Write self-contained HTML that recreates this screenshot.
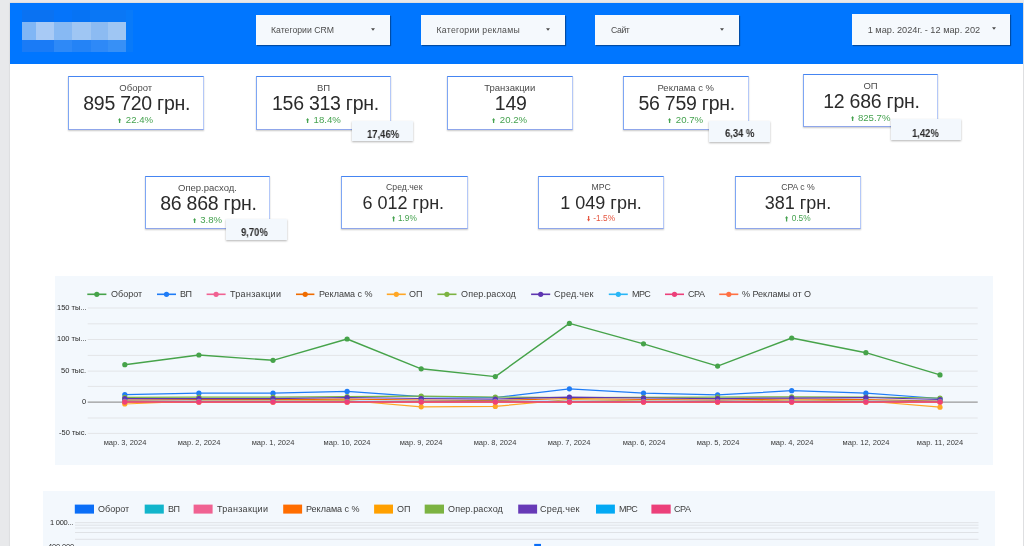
<!DOCTYPE html>
<html><head><meta charset="utf-8">
<style>
*{margin:0;padding:0;box-sizing:border-box}
html,body{width:1024px;height:546px;overflow:hidden;background:#e8e9eb;font-family:"Liberation Sans",sans-serif;-webkit-font-smoothing:antialiased}
body>*{will-change:transform}
.abs{position:absolute}
#page{position:absolute;left:10px;top:3px;width:1012.5px;height:560px;background:#fff;box-shadow:0 0 1.5px rgba(0,0,0,.16)}
#hdr{position:absolute;left:10px;top:3px;width:1012.8px;height:60.8px;background:#0076ff}
.px{position:absolute}
.dd{position:absolute;top:14.5px;height:30px;background:#f5f9fd;box-shadow:1px 1px 1px rgba(0,0,0,.35);color:#4d4d4d;font-size:8.7px;line-height:30px;white-space:nowrap}
.dd span{position:absolute;top:0}
.dd i{position:absolute;top:13.4px;width:4px;height:3px;display:block}
.dd i svg{display:block}
.card{position:absolute;background:#fff;border-top:1px solid #4585f2;border-left:1px solid #7ea6f4;border-right:1px solid #b4c8f8;border-bottom:1px solid #8fa6ea;box-shadow:0 1px 1.5px rgba(0,0,0,.22);text-align:center;color:#333}
.card .t{position:absolute;left:0;right:0;top:5px;font-size:9.5px;color:#4a4a4a;line-height:12px}
.card .v{position:absolute;left:0;right:0;top:14.7px;padding-left:2px;font-size:19.5px;letter-spacing:-0.25px;color:#2b2b2b;line-height:22px}
.card .d{position:absolute;left:0;right:0;top:36.6px;font-size:9.6px;color:#45a24f;line-height:12px;display:flex;justify-content:center;align-items:center}
.card .d .ar{margin-right:4.2px;margin-top:2px}
.card .d.red{color:#e5553f}
.card.c2 .t{font-size:8.7px;top:4px}
.card.c2 .v{font-size:18px;top:15.2px;padding-left:0;letter-spacing:0}
.card.c2 .d{font-size:8.3px;top:35px}
.card.c2 .d .ar{margin-right:3px;margin-top:1.5px}
.badge{position:absolute;background:#f3f8fd;box-shadow:0 1px 2px rgba(0,0,0,.3)}
.bt{position:absolute;font-weight:bold;font-size:10.5px;line-height:10.5px;color:#2a2a2a;transform:scaleX(.9);transform-origin:0 0;white-space:nowrap}
.chart{position:absolute;background:#f3f8fd}
.lg{position:absolute;font-size:9px;color:#3c3c3c;white-space:nowrap;line-height:12px}
.yl{position:absolute;font-size:7.5px;color:#2a2a2a;text-align:right;white-space:nowrap;line-height:10px}
.xl{position:absolute;font-size:7.5px;color:#3a3a3a;white-space:nowrap;line-height:10px;text-align:center;width:80px}
</style></head><body>
<div id="page"></div>
<div id="hdr"></div>
<!-- pixelated logo -->
<div class="px" style="left:21.7px;top:9.9px;width:32.4px;height:11.6px;background:#0a72f2"></div><div class="px" style="left:54.1px;top:9.9px;width:17.7px;height:11.6px;background:#0574fa"></div><div class="px" style="left:71.8px;top:9.9px;width:18.2px;height:11.6px;background:#0673f4"></div><div class="px" style="left:90px;top:9.9px;width:36px;height:11.6px;background:#0a77f5"></div><div class="px" style="left:126px;top:9.9px;width:6.8px;height:41.5px;background:#087af9"></div>
<div class="px" style="left:21.6px;top:22px;width:14.4px;height:17.6px;background:#80b6f5"></div>
<div class="px" style="left:36px;top:22px;width:18.4px;height:17.6px;background:#a8caf5"></div>
<div class="px" style="left:54.4px;top:22px;width:17.8px;height:17.6px;background:#87b9f3"></div>
<div class="px" style="left:72.2px;top:22px;width:18.5px;height:17.6px;background:#9fc6f3"></div>
<div class="px" style="left:90.7px;top:22px;width:17.7px;height:17.6px;background:#8cbbf2"></div>
<div class="px" style="left:108.4px;top:22px;width:17.8px;height:17.6px;background:#9fc6f3"></div>

<div class="px" style="left:21.6px;top:39.6px;width:32.8px;height:11.7px;background:#1a7bf6"></div>
<div class="px" style="left:54.4px;top:39.6px;width:17.8px;height:11.7px;background:#2e89f7"></div>
<div class="px" style="left:72.2px;top:39.6px;width:18.5px;height:11.7px;background:#2483f6"></div>
<div class="px" style="left:90.7px;top:39.6px;width:17.7px;height:11.7px;background:#2e89f7"></div>
<div class="px" style="left:108.4px;top:39.6px;width:17.8px;height:11.7px;background:#3790f6"></div>

<!-- dropdowns -->
<div class="dd" style="left:256px;width:134px"><span style="left:15px">Категории CRM</span><i style="left:115.3px"><svg width="4" height="3" viewBox="0 0 4 3"><path d="M0 0.2H4L2 2.8Z" fill="#4a4a4a"/></svg></i></div>
<div class="dd" style="left:421px;width:143.5px"><span style="left:15.5px;letter-spacing:0.27px">Категории рекламы</span><i style="left:125.4px"><svg width="4" height="3" viewBox="0 0 4 3"><path d="M0 0.2H4L2 2.8Z" fill="#4a4a4a"/></svg></i></div>
<div class="dd" style="left:595px;width:144px"><span style="left:16px;letter-spacing:-0.4px">Сайт</span><i style="left:124.7px"><svg width="4" height="3" viewBox="0 0 4 3"><path d="M0 0.2H4L2 2.8Z" fill="#4a4a4a"/></svg></i></div>
<div class="dd" style="left:852.4px;top:14px;height:31px;width:157.8px;font-size:9.2px;line-height:33px"><span style="left:15.7px">1 мар. 2024г. - 12 мар. 202</span><i style="left:139.5px;top:13.3px"><svg width="4" height="3" viewBox="0 0 4 3"><path d="M0 0.2H4L2 2.8Z" fill="#4a4a4a"/></svg></i></div>

<!-- cards row 1 -->
<div class="card " style="left:68px;top:76px;width:135.5px;height:53.5px"><div class="t">Оборот</div><div class="v">895 720 грн.</div><div class="d"><svg class="ar" width="3.2" height="5.6" viewBox="0 0 4 6" preserveAspectRatio="none"><path d="M2 0L4 2.4H2.8V6H1.2V2.4H0Z" fill="currentColor"/></svg><span>22.4%</span></div></div>
<div class="card " style="left:256px;top:76px;width:135px;height:53.5px"><div class="t">ВП</div><div class="v" style="padding-left:4px">156 313 грн.</div><div class="d"><svg class="ar" width="3.2" height="5.6" viewBox="0 0 4 6" preserveAspectRatio="none"><path d="M2 0L4 2.4H2.8V6H1.2V2.4H0Z" fill="currentColor"/></svg><span>18.4%</span></div></div>
<div class="card " style="left:446.9px;top:76px;width:125.5px;height:53.5px"><div class="t">Транзакции</div><div class="v">149</div><div class="d"><svg class="ar" width="3.2" height="5.6" viewBox="0 0 4 6" preserveAspectRatio="none"><path d="M2 0L4 2.4H2.8V6H1.2V2.4H0Z" fill="currentColor"/></svg><span>20.2%</span></div></div>
<div class="card " style="left:623.4px;top:76px;width:125.5px;height:53.5px"><div class="t">Реклама с %</div><div class="v">56 759 грн.</div><div class="d"><svg class="ar" width="3.2" height="5.6" viewBox="0 0 4 6" preserveAspectRatio="none"><path d="M2 0L4 2.4H2.8V6H1.2V2.4H0Z" fill="currentColor"/></svg><span>20.7%</span></div></div>
<div class="card " style="left:803.4px;top:74px;width:135px;height:52.5px"><div class="t">ОП</div><div class="v">12 686 грн.</div><div class="d"><svg class="ar" width="3.2" height="5.6" viewBox="0 0 4 6" preserveAspectRatio="none"><path d="M2 0L4 2.4H2.8V6H1.2V2.4H0Z" fill="currentColor"/></svg><span>825.7%</span></div></div>
<div class="badge" style="left:351.6px;top:120.9px;width:60.6px;height:20.3px"></div><div class="bt" style="left:367.09999999999997px;top:128.95999999999998px">17,46%</div>
<div class="badge" style="left:709px;top:120.6px;width:60.5px;height:20.6px"></div><div class="bt" style="left:724.8px;top:127.76px">6,34 %</div>
<div class="badge" style="left:890.6px;top:118.6px;width:69.8px;height:20.7px"></div><div class="bt" style="left:912.1px;top:127.56000000000002px">1,42%</div>

<!-- cards row 2 -->
<div class="card " style="left:145px;top:176.4px;width:125px;height:53px"><div class="t">Опер.расход.</div><div class="v">86 868 грн.</div><div class="d"><svg class="ar" width="3.2" height="5.6" viewBox="0 0 4 6" preserveAspectRatio="none"><path d="M2 0L4 2.4H2.8V6H1.2V2.4H0Z" fill="currentColor"/></svg><span>3.8%</span></div></div>
<div class="card c2" style="left:340.5px;top:176.4px;width:126.6px;height:52.5px"><div class="t">Сред.чек</div><div class="v" style="padding-right:2px">6 012 грн.</div><div class="d"><svg class="ar" width="3.2" height="5.6" viewBox="0 0 4 6" preserveAspectRatio="none"><path d="M2 0L4 2.4H2.8V6H1.2V2.4H0Z" fill="currentColor"/></svg><span>1.9%</span></div></div>
<div class="card c2" style="left:538.2px;top:176.4px;width:126.2px;height:52.8px"><div class="t">МРС</div><div class="v">1 049 грн.</div><div class="d red"><svg class="ar" width="3.2" height="5.6" viewBox="0 0 4 6" preserveAspectRatio="none"><path d="M2 6L4 3.6H2.8V0H1.2V3.6H0Z" fill="currentColor"/></svg><span>-1.5%</span></div></div>
<div class="card c2" style="left:735px;top:176.4px;width:126px;height:52.8px"><div class="t">CPA с %</div><div class="v">381 грн.</div><div class="d"><svg class="ar" width="3.2" height="5.6" viewBox="0 0 4 6" preserveAspectRatio="none"><path d="M2 0L4 2.4H2.8V6H1.2V2.4H0Z" fill="currentColor"/></svg><span>0.5%</span></div></div>

<div class="badge" style="left:225.6px;top:218.6px;width:60.8px;height:20.6px"></div><div class="bt" style="left:241.3px;top:227.35999999999999px">9,70%</div>
<!-- line chart -->
<div class="chart" style="left:55px;top:276px;width:937.5px;height:188.6px"></div>
<!-- bar chart -->
<div class="chart" style="left:43px;top:491px;width:951.8px;height:60px"></div>
<!--CHART--><svg class="abs" style="left:0;top:0" width="1024" height="546" viewBox="0 0 1024 546">
<line x1="87.7" y1="308.00" x2="977.7" y2="308.00" stroke="#e3e5e8" stroke-width="1"/>
<line x1="87.7" y1="323.80" x2="977.7" y2="323.80" stroke="#e3e5e8" stroke-width="1"/>
<line x1="87.7" y1="339.50" x2="977.7" y2="339.50" stroke="#e3e5e8" stroke-width="1"/>
<line x1="87.7" y1="355.40" x2="977.7" y2="355.40" stroke="#e3e5e8" stroke-width="1"/>
<line x1="87.7" y1="371.10" x2="977.7" y2="371.10" stroke="#e3e5e8" stroke-width="1"/>
<line x1="87.7" y1="386.40" x2="977.7" y2="386.40" stroke="#e3e5e8" stroke-width="1"/>
<line x1="87.7" y1="418.00" x2="977.7" y2="418.00" stroke="#e3e5e8" stroke-width="1"/>
<line x1="87.7" y1="433.40" x2="977.7" y2="433.40" stroke="#e3e5e8" stroke-width="1"/>
<line x1="87.7" y1="402.1" x2="977.7" y2="402.1" stroke="#999" stroke-width="1.4"/>
<polyline points="124.8,364.7 198.9,355.0 273.0,360.3 347.1,339.0 421.2,368.8 495.3,376.6 569.4,323.4 643.5,343.8 717.6,366.1 791.7,338.0 865.9,352.7 940.0,374.9" fill="none" stroke="#46a34a" stroke-width="1.4" stroke-linejoin="round"/>
<circle cx="124.8" cy="364.7" r="2.6" fill="#46a34a"/>
<circle cx="198.9" cy="355.0" r="2.6" fill="#46a34a"/>
<circle cx="273.0" cy="360.3" r="2.6" fill="#46a34a"/>
<circle cx="347.1" cy="339.0" r="2.6" fill="#46a34a"/>
<circle cx="421.2" cy="368.8" r="2.6" fill="#46a34a"/>
<circle cx="495.3" cy="376.6" r="2.6" fill="#46a34a"/>
<circle cx="569.4" cy="323.4" r="2.6" fill="#46a34a"/>
<circle cx="643.5" cy="343.8" r="2.6" fill="#46a34a"/>
<circle cx="717.6" cy="366.1" r="2.6" fill="#46a34a"/>
<circle cx="791.7" cy="338.0" r="2.6" fill="#46a34a"/>
<circle cx="865.9" cy="352.7" r="2.6" fill="#46a34a"/>
<circle cx="940.0" cy="374.9" r="2.6" fill="#46a34a"/>
<polyline points="124.8,394.7 198.9,393.2 273.0,393.2 347.1,391.4 421.2,396.6 495.3,397.5 569.4,388.8 643.5,393.1 717.6,394.9 791.7,390.7 865.9,393.2 940.0,398.5" fill="none" stroke="#1f7cf6" stroke-width="1.25" stroke-linejoin="round"/>
<circle cx="124.8" cy="394.7" r="2.6" fill="#1f7cf6"/>
<circle cx="198.9" cy="393.2" r="2.6" fill="#1f7cf6"/>
<circle cx="273.0" cy="393.2" r="2.6" fill="#1f7cf6"/>
<circle cx="347.1" cy="391.4" r="2.6" fill="#1f7cf6"/>
<circle cx="421.2" cy="396.6" r="2.6" fill="#1f7cf6"/>
<circle cx="495.3" cy="397.5" r="2.6" fill="#1f7cf6"/>
<circle cx="569.4" cy="388.8" r="2.6" fill="#1f7cf6"/>
<circle cx="643.5" cy="393.1" r="2.6" fill="#1f7cf6"/>
<circle cx="717.6" cy="394.9" r="2.6" fill="#1f7cf6"/>
<circle cx="791.7" cy="390.7" r="2.6" fill="#1f7cf6"/>
<circle cx="865.9" cy="393.2" r="2.6" fill="#1f7cf6"/>
<circle cx="940.0" cy="398.5" r="2.6" fill="#1f7cf6"/>
<polyline points="124.8,402.0 198.9,402.0 273.0,402.0 347.1,402.0 421.2,402.0 495.3,402.0 569.4,402.0 643.5,402.0 717.6,402.0 791.7,402.0 865.9,402.0 940.0,402.0" fill="none" stroke="#f06292" stroke-width="1.25" stroke-linejoin="round"/>
<circle cx="124.8" cy="402.0" r="2.6" fill="#f06292"/>
<circle cx="198.9" cy="402.0" r="2.6" fill="#f06292"/>
<circle cx="273.0" cy="402.0" r="2.6" fill="#f06292"/>
<circle cx="347.1" cy="402.0" r="2.6" fill="#f06292"/>
<circle cx="421.2" cy="402.0" r="2.6" fill="#f06292"/>
<circle cx="495.3" cy="402.0" r="2.6" fill="#f06292"/>
<circle cx="569.4" cy="402.0" r="2.6" fill="#f06292"/>
<circle cx="643.5" cy="402.0" r="2.6" fill="#f06292"/>
<circle cx="717.6" cy="402.0" r="2.6" fill="#f06292"/>
<circle cx="791.7" cy="402.0" r="2.6" fill="#f06292"/>
<circle cx="865.9" cy="402.0" r="2.6" fill="#f06292"/>
<circle cx="940.0" cy="402.0" r="2.6" fill="#f06292"/>
<polyline points="124.8,400.0 198.9,399.5 273.0,399.5 347.1,399.0 421.2,400.0 495.3,400.5 569.4,398.5 643.5,399.5 717.6,400.0 791.7,399.0 865.9,399.5 940.0,401.0" fill="none" stroke="#ef6c00" stroke-width="1.25" stroke-linejoin="round"/>
<circle cx="124.8" cy="400.0" r="2.6" fill="#ef6c00"/>
<circle cx="198.9" cy="399.5" r="2.6" fill="#ef6c00"/>
<circle cx="273.0" cy="399.5" r="2.6" fill="#ef6c00"/>
<circle cx="347.1" cy="399.0" r="2.6" fill="#ef6c00"/>
<circle cx="421.2" cy="400.0" r="2.6" fill="#ef6c00"/>
<circle cx="495.3" cy="400.5" r="2.6" fill="#ef6c00"/>
<circle cx="569.4" cy="398.5" r="2.6" fill="#ef6c00"/>
<circle cx="643.5" cy="399.5" r="2.6" fill="#ef6c00"/>
<circle cx="717.6" cy="400.0" r="2.6" fill="#ef6c00"/>
<circle cx="791.7" cy="399.0" r="2.6" fill="#ef6c00"/>
<circle cx="865.9" cy="399.5" r="2.6" fill="#ef6c00"/>
<circle cx="940.0" cy="401.0" r="2.6" fill="#ef6c00"/>
<polyline points="124.8,404.0 198.9,401.0 273.0,401.0 347.1,400.5 421.2,406.8 495.3,406.4 569.4,399.5 643.5,401.0 717.6,402.0 791.7,400.0 865.9,401.0 940.0,407.2" fill="none" stroke="#ffa726" stroke-width="1.25" stroke-linejoin="round"/>
<circle cx="124.8" cy="404.0" r="2.6" fill="#ffa726"/>
<circle cx="198.9" cy="401.0" r="2.6" fill="#ffa726"/>
<circle cx="273.0" cy="401.0" r="2.6" fill="#ffa726"/>
<circle cx="347.1" cy="400.5" r="2.6" fill="#ffa726"/>
<circle cx="421.2" cy="406.8" r="2.6" fill="#ffa726"/>
<circle cx="495.3" cy="406.4" r="2.6" fill="#ffa726"/>
<circle cx="569.4" cy="399.5" r="2.6" fill="#ffa726"/>
<circle cx="643.5" cy="401.0" r="2.6" fill="#ffa726"/>
<circle cx="717.6" cy="402.0" r="2.6" fill="#ffa726"/>
<circle cx="791.7" cy="400.0" r="2.6" fill="#ffa726"/>
<circle cx="865.9" cy="401.0" r="2.6" fill="#ffa726"/>
<circle cx="940.0" cy="407.2" r="2.6" fill="#ffa726"/>
<polyline points="124.8,397.3 198.9,397.0 273.0,397.0 347.1,396.5 421.2,396.2 495.3,397.0 569.4,397.6 643.5,397.4 717.6,397.0 791.7,396.8 865.9,397.0 940.0,398.0" fill="none" stroke="#7cb342" stroke-width="1.25" stroke-linejoin="round"/>
<circle cx="124.8" cy="397.3" r="2.6" fill="#7cb342"/>
<circle cx="198.9" cy="397.0" r="2.6" fill="#7cb342"/>
<circle cx="273.0" cy="397.0" r="2.6" fill="#7cb342"/>
<circle cx="347.1" cy="396.5" r="2.6" fill="#7cb342"/>
<circle cx="421.2" cy="396.2" r="2.6" fill="#7cb342"/>
<circle cx="495.3" cy="397.0" r="2.6" fill="#7cb342"/>
<circle cx="569.4" cy="397.6" r="2.6" fill="#7cb342"/>
<circle cx="643.5" cy="397.4" r="2.6" fill="#7cb342"/>
<circle cx="717.6" cy="397.0" r="2.6" fill="#7cb342"/>
<circle cx="791.7" cy="396.8" r="2.6" fill="#7cb342"/>
<circle cx="865.9" cy="397.0" r="2.6" fill="#7cb342"/>
<circle cx="940.0" cy="398.0" r="2.6" fill="#7cb342"/>
<polyline points="124.8,398.5 198.9,398.5 273.0,398.5 347.1,397.5 421.2,398.5 495.3,399.0 569.4,397.2 643.5,398.0 717.6,398.5 791.7,398.0 865.9,397.5 940.0,399.5" fill="none" stroke="#5e35b1" stroke-width="1.25" stroke-linejoin="round"/>
<circle cx="124.8" cy="398.5" r="2.6" fill="#5e35b1"/>
<circle cx="198.9" cy="398.5" r="2.6" fill="#5e35b1"/>
<circle cx="273.0" cy="398.5" r="2.6" fill="#5e35b1"/>
<circle cx="347.1" cy="397.5" r="2.6" fill="#5e35b1"/>
<circle cx="421.2" cy="398.5" r="2.6" fill="#5e35b1"/>
<circle cx="495.3" cy="399.0" r="2.6" fill="#5e35b1"/>
<circle cx="569.4" cy="397.2" r="2.6" fill="#5e35b1"/>
<circle cx="643.5" cy="398.0" r="2.6" fill="#5e35b1"/>
<circle cx="717.6" cy="398.5" r="2.6" fill="#5e35b1"/>
<circle cx="791.7" cy="398.0" r="2.6" fill="#5e35b1"/>
<circle cx="865.9" cy="397.5" r="2.6" fill="#5e35b1"/>
<circle cx="940.0" cy="399.5" r="2.6" fill="#5e35b1"/>
<polyline points="124.8,401.3 198.9,401.3 273.0,401.3 347.1,401.3 421.2,401.3 495.3,401.3 569.4,401.3 643.5,401.3 717.6,401.3 791.7,401.3 865.9,401.3 940.0,401.3" fill="none" stroke="#29b6f6" stroke-width="1.25" stroke-linejoin="round"/>
<circle cx="124.8" cy="401.3" r="2.6" fill="#29b6f6"/>
<circle cx="198.9" cy="401.3" r="2.6" fill="#29b6f6"/>
<circle cx="273.0" cy="401.3" r="2.6" fill="#29b6f6"/>
<circle cx="347.1" cy="401.3" r="2.6" fill="#29b6f6"/>
<circle cx="421.2" cy="401.3" r="2.6" fill="#29b6f6"/>
<circle cx="495.3" cy="401.3" r="2.6" fill="#29b6f6"/>
<circle cx="569.4" cy="401.3" r="2.6" fill="#29b6f6"/>
<circle cx="643.5" cy="401.3" r="2.6" fill="#29b6f6"/>
<circle cx="717.6" cy="401.3" r="2.6" fill="#29b6f6"/>
<circle cx="791.7" cy="401.3" r="2.6" fill="#29b6f6"/>
<circle cx="865.9" cy="401.3" r="2.6" fill="#29b6f6"/>
<circle cx="940.0" cy="401.3" r="2.6" fill="#29b6f6"/>
<polyline points="124.8,402.2 198.9,402.2 273.0,402.2 347.1,402.2 421.2,402.2 495.3,402.2 569.4,402.2 643.5,402.2 717.6,402.2 791.7,402.2 865.9,402.2 940.0,402.2" fill="none" stroke="#ff7043" stroke-width="1.25" stroke-linejoin="round"/>
<circle cx="124.8" cy="402.2" r="2.6" fill="#ff7043"/>
<circle cx="198.9" cy="402.2" r="2.6" fill="#ff7043"/>
<circle cx="273.0" cy="402.2" r="2.6" fill="#ff7043"/>
<circle cx="347.1" cy="402.2" r="2.6" fill="#ff7043"/>
<circle cx="421.2" cy="402.2" r="2.6" fill="#ff7043"/>
<circle cx="495.3" cy="402.2" r="2.6" fill="#ff7043"/>
<circle cx="569.4" cy="402.2" r="2.6" fill="#ff7043"/>
<circle cx="643.5" cy="402.2" r="2.6" fill="#ff7043"/>
<circle cx="717.6" cy="402.2" r="2.6" fill="#ff7043"/>
<circle cx="791.7" cy="402.2" r="2.6" fill="#ff7043"/>
<circle cx="865.9" cy="402.2" r="2.6" fill="#ff7043"/>
<circle cx="940.0" cy="402.2" r="2.6" fill="#ff7043"/>
<polyline points="124.8,401.8 198.9,401.8 273.0,401.8 347.1,401.8 421.2,401.8 495.3,401.8 569.4,401.8 643.5,401.8 717.6,401.8 791.7,401.8 865.9,401.8 940.0,401.8" fill="none" stroke="#ec407a" stroke-width="1.25" stroke-linejoin="round"/>
<circle cx="124.8" cy="401.8" r="2.6" fill="#ec407a"/>
<circle cx="198.9" cy="401.8" r="2.6" fill="#ec407a"/>
<circle cx="273.0" cy="401.8" r="2.6" fill="#ec407a"/>
<circle cx="347.1" cy="401.8" r="2.6" fill="#ec407a"/>
<circle cx="421.2" cy="401.8" r="2.6" fill="#ec407a"/>
<circle cx="495.3" cy="401.8" r="2.6" fill="#ec407a"/>
<circle cx="569.4" cy="401.8" r="2.6" fill="#ec407a"/>
<circle cx="643.5" cy="401.8" r="2.6" fill="#ec407a"/>
<circle cx="717.6" cy="401.8" r="2.6" fill="#ec407a"/>
<circle cx="791.7" cy="401.8" r="2.6" fill="#ec407a"/>
<circle cx="865.9" cy="401.8" r="2.6" fill="#ec407a"/>
<circle cx="940.0" cy="401.8" r="2.6" fill="#ec407a"/>
<line x1="87.3" y1="294.3" x2="106.4" y2="294.3" stroke="#46a34a" stroke-width="1.6"/>
<circle cx="96.8" cy="294.3" r="2.6" fill="#46a34a"/>
<line x1="157" y1="294.3" x2="176" y2="294.3" stroke="#1f7cf6" stroke-width="1.6"/>
<circle cx="166.5" cy="294.3" r="2.6" fill="#1f7cf6"/>
<line x1="206.6" y1="294.3" x2="225.6" y2="294.3" stroke="#f06292" stroke-width="1.6"/>
<circle cx="216.1" cy="294.3" r="2.6" fill="#f06292"/>
<line x1="296" y1="294.3" x2="314.4" y2="294.3" stroke="#ef6c00" stroke-width="1.6"/>
<circle cx="305.2" cy="294.3" r="2.6" fill="#ef6c00"/>
<line x1="386.8" y1="294.3" x2="405.8" y2="294.3" stroke="#ffa726" stroke-width="1.6"/>
<circle cx="396.3" cy="294.3" r="2.6" fill="#ffa726"/>
<line x1="437.4" y1="294.3" x2="456.5" y2="294.3" stroke="#7cb342" stroke-width="1.6"/>
<circle cx="446.9" cy="294.3" r="2.6" fill="#7cb342"/>
<line x1="531.1" y1="294.3" x2="550.2" y2="294.3" stroke="#5e35b1" stroke-width="1.6"/>
<circle cx="540.7" cy="294.3" r="2.6" fill="#5e35b1"/>
<line x1="608.8" y1="294.3" x2="627.8" y2="294.3" stroke="#29b6f6" stroke-width="1.6"/>
<circle cx="618.3" cy="294.3" r="2.6" fill="#29b6f6"/>
<line x1="665" y1="294.3" x2="684" y2="294.3" stroke="#ec407a" stroke-width="1.6"/>
<circle cx="674.5" cy="294.3" r="2.6" fill="#ec407a"/>
<line x1="719.2" y1="294.3" x2="738.3" y2="294.3" stroke="#ff7043" stroke-width="1.6"/>
<circle cx="728.8" cy="294.3" r="2.6" fill="#ff7043"/>
<line x1="75" y1="522.7" x2="978.5" y2="522.7" stroke="#dfe2e6" stroke-width="1"/>
<line x1="75" y1="525.2" x2="978.5" y2="525.2" stroke="#dfe2e6" stroke-width="1"/>
<line x1="75" y1="528.0" x2="978.5" y2="528.0" stroke="#dfe2e6" stroke-width="1"/>
<line x1="75" y1="532.5" x2="978.5" y2="532.5" stroke="#dfe2e6" stroke-width="1"/>
<line x1="75" y1="539.3" x2="978.5" y2="539.3" stroke="#dfe2e6" stroke-width="1"/>
<rect x="74.8" y="504.6" width="19.2" height="9" fill="#0b6ef7"/>
<rect x="144.7" y="504.6" width="19.1" height="9" fill="#12b5cb"/>
<rect x="193.6" y="504.6" width="19.0" height="9" fill="#f06292"/>
<rect x="283.2" y="504.6" width="18.9" height="9" fill="#ff6d00"/>
<rect x="374.1" y="504.6" width="18.9" height="9" fill="#ffa000"/>
<rect x="424.7" y="504.6" width="19.3" height="9" fill="#7cb342"/>
<rect x="518.2" y="504.6" width="18.9" height="9" fill="#673ab7"/>
<rect x="596" y="504.6" width="18.9" height="9" fill="#03a9f4"/>
<rect x="651.4" y="504.6" width="19.3" height="9" fill="#ec407a"/>
<rect x="534.2" y="543.9" width="6.8" height="3" fill="#0b6ef7"/>
</svg>
<div class="lg" style="left:110.8px;top:288.3px;letter-spacing:0px">Оборот</div>
<div class="lg" style="left:180.2px;top:288.3px;letter-spacing:-0.5px">ВП</div>
<div class="lg" style="left:230px;top:288.3px;letter-spacing:0.3px">Транзакции</div>
<div class="lg" style="left:318.8px;top:288.3px;letter-spacing:0px">Реклама с %</div>
<div class="lg" style="left:409.3px;top:288.3px;letter-spacing:0px">ОП</div>
<div class="lg" style="left:460.6px;top:288.3px;letter-spacing:0.15px">Опер.расход</div>
<div class="lg" style="left:554.3px;top:288.3px;letter-spacing:0.25px">Сред.чек</div>
<div class="lg" style="left:632px;top:288.3px;letter-spacing:-0.6px">МРС</div>
<div class="lg" style="left:687.9px;top:288.3px;letter-spacing:-0.4px">CPA</div>
<div class="lg" style="left:741.8px;top:288.3px;letter-spacing:0px">% Рекламы от О</div>
<div class="yl" style="right:937.5px;top:303.0px">150 ты...</div>
<div class="yl" style="right:937.5px;top:334.3px">100 ты...</div>
<div class="yl" style="right:937.5px;top:366.1px">50 тыс.</div>
<div class="yl" style="right:937.5px;top:397.1px">0</div>
<div class="yl" style="right:937.5px;top:428.4px">-50 тыс.</div>
<div class="xl" style="left:84.8px;top:438px">мар. 3, 2024</div>
<div class="xl" style="left:158.9px;top:438px">мар. 2, 2024</div>
<div class="xl" style="left:233.0px;top:438px">мар. 1, 2024</div>
<div class="xl" style="left:307.1px;top:438px">мар. 10, 2024</div>
<div class="xl" style="left:381.2px;top:438px">мар. 9, 2024</div>
<div class="xl" style="left:455.3px;top:438px">мар. 8, 2024</div>
<div class="xl" style="left:529.4px;top:438px">мар. 7, 2024</div>
<div class="xl" style="left:603.5px;top:438px">мар. 6, 2024</div>
<div class="xl" style="left:677.6px;top:438px">мар. 5, 2024</div>
<div class="xl" style="left:751.7px;top:438px">мар. 4, 2024</div>
<div class="xl" style="left:825.9px;top:438px">мар. 12, 2024</div>
<div class="xl" style="left:900.0px;top:438px">мар. 11, 2024</div>
<div class="lg" style="left:97.9px;top:503px;letter-spacing:0px">Оборот</div>
<div class="lg" style="left:167.5px;top:503px;letter-spacing:-0.5px">ВП</div>
<div class="lg" style="left:217.3px;top:503px;letter-spacing:0.3px">Транзакции</div>
<div class="lg" style="left:306px;top:503px;letter-spacing:0px">Реклама с %</div>
<div class="lg" style="left:396.5px;top:503px;letter-spacing:0px">ОП</div>
<div class="lg" style="left:447.5px;top:503px;letter-spacing:0.15px">Опер.расход</div>
<div class="lg" style="left:540.2px;top:503px;letter-spacing:0.25px">Сред.чек</div>
<div class="lg" style="left:619.3px;top:503px;letter-spacing:-0.6px">МРС</div>
<div class="lg" style="left:674.2px;top:503px;letter-spacing:-0.4px">CPA</div>
<div class="yl" style="right:950.5px;top:517.6px;letter-spacing:-0.25px">1 000...</div>
<div class="yl" style="right:950.2px;top:541.5px;letter-spacing:-0.15px">400 000</div><!--/CHART-->

</body></html>
